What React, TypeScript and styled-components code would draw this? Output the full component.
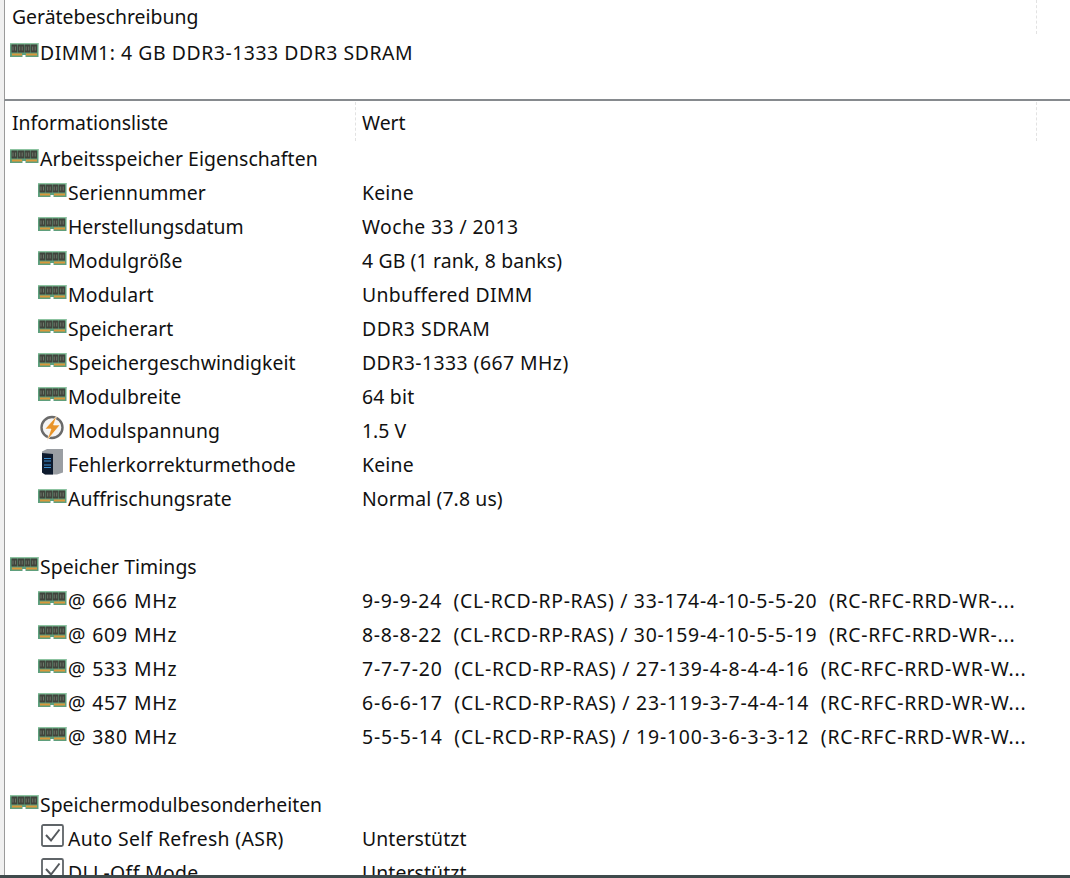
import React from "react";
import styled, { createGlobalStyle } from "styled-components";

const Global = createGlobalStyle`
  html, body { margin: 0; padding: 0; background: #fff; }
  body { width: 1070px; height: 878px; overflow: hidden; }
`;

const Page = styled.div`
  width: 1070px;
  height: 878px;
  box-sizing: border-box;
  display: flex;
  flex-direction: column;
  overflow: hidden;
  padding-left: 4px;
  background: #f0f0f0;
  border-bottom: 3px solid #3f4a4c;
  font-family: "Noto Sans", "Open Sans", sans-serif;
  font-size: 19.4px;
  color: #111;
`;

const Panel = styled.div`
  flex: 1;
  min-height: 0;
  overflow: hidden;
  background: #fff;
  border-left: 1px solid #9a9a9a;
  padding-left: 1px;
`;

const TopPanel = styled(Panel)`
  flex: none;
  height: 99px;
  border-bottom: 2px solid #868a8e;
`;

const HeaderRow = styled.div`
  height: 34px;
  display: grid;
  grid-template-columns: 1031px 1fr;
`;

const ListHeaderRow = styled.div`
  height: 41px;
  box-sizing: border-box;
  padding-top: 1px;
  display: grid;
  grid-template-columns: 350px 681px 1fr;
`;

const HeaderCell = styled.div`
  display: flex;
  align-items: center;
  padding-left: 6px;
  padding-bottom: 2px;
  white-space: pre;
  border-right: ${p => (p.$plain ? "none" : "1px dashed #e2e2e2")};
`;

const ListHeaderCell = styled(HeaderCell)`
  padding-top: 3px;
  padding-bottom: 1px;
  margin-bottom: 1px;
`;

const Row = styled.div`
  height: 34px;
  display: grid;
  grid-template-columns: 350px 1fr;
  align-items: center;
`;

const DeviceRow = styled(Row)`
  margin-top: 2px;
`;

const NameCell = styled.div`
  display: flex;
  align-items: center;
  padding-left: ${p => 4 + p.$level * 28}px;
  padding-bottom: 2px;
  white-space: pre;
  letter-spacing: ${p => p.$ls ?? 0}px;
`;

const ValueCell = styled.div`
  padding-left: 6px;
  padding-bottom: 2px;
  white-space: pre;
  letter-spacing: ${p => p.$ls ?? 0}px;
`;

const IconBox = styled.svg`
  flex: none;
  width: 30px;
  height: 24px;
  position: relative;
  top: -2px;
  overflow: visible;
`;

const Ram = () => (
  <IconBox viewBox="0 0 30 24">
    <rect x="0" y="5" width="28.5" height="14" fill="#5f9f7c" />
    <rect x="0" y="5" width="28.5" height="1.4" fill="#8cc3a0" />
    <rect x="1.5" y="6.5" width="6" height="8" fill="#40443c" />
    <rect x="8" y="6.5" width="6" height="8" fill="#40443c" />
    <rect x="14.5" y="6.5" width="6" height="8" fill="#40443c" />
    <rect x="21" y="6.5" width="6" height="8" fill="#40443c" />
    <path d="M3 8.5v4M5.5 8.5v4M9.7 8.5v4M12.2 8.5v4M16.2 8.5v4M18.7 8.5v4M22.7 8.5v4M25.2 8.5v4" stroke="#7a8476" strokeWidth="0.8" />
    <rect x="2" y="15.5" width="10" height="2" fill="#d9983a" />
    <rect x="16" y="15.5" width="11" height="2" fill="#d9983a" />
    <rect x="12.5" y="17" width="3" height="2.2" fill="#fff" />
  </IconBox>
);

const Bolt = () => (
  <IconBox viewBox="0 0 30 24">
    <circle cx="14" cy="11.5" r="10.5" fill="#f4f4f4" stroke="#6a6a6a" strokeWidth="2.4" />
    <path d="M19 -0.5 7 13h6l-4 11.5 13-15.5h-6.5z" fill="#e8942a" stroke="#fff" strokeWidth="0.6" />
  </IconBox>
);

const Server = () => (
  <IconBox viewBox="0 0 30 24">
    <path d="M4 1.5 9 -1h16v23.5l-6 2H7l-3-2z" fill="#9a9ea3" />
    <path d="M4 3l11 1v20.5H7l-3-2z" fill="#0e1b2e" />
    <path d="M6 8.5h7M6 11h7M6 15h7M6 17.5h7" stroke="#3d8fd0" strokeWidth="1" />
  </IconBox>
);

const Check = () => (
  <IconBox viewBox="0 0 30 24">
    <rect x="4" y="1" width="21" height="21" rx="1.5" fill="#fff" stroke="#5f6468" strokeWidth="1.8" />
    <path d="m8 11 5 5.5 8.5-11" fill="none" stroke="#55595d" strokeWidth="2" />
  </IconBox>
);

const icons = { ram: Ram, bolt: Bolt, server: Server, check: Check };

type Item = { level?: number; icon?: keyof typeof icons; name?: string; value?: string; ls?: number; vs?: number };

const rows: Item[] = [
  { level: 0, icon: "ram", name: "Arbeitsspeicher Eigenschaften", ls: 0.07 },
  { level: 1, icon: "ram", name: "Seriennummer", value: "Keine", ls: 0.1, vs: 0.2 },
  { level: 1, icon: "ram", name: "Herstellungsdatum", value: "Woche 33 / 2013", ls: 0, vs: 0.4 },
  { level: 1, icon: "ram", name: "Modulgröße", value: "4 GB (1 rank, 8 banks)", ls: 0.2, vs: 0.13 },
  { level: 1, icon: "ram", name: "Modulart", value: "Unbuffered DIMM", ls: 0.2, vs: 0.33 },
  { level: 1, icon: "ram", name: "Speicherart", value: "DDR3 SDRAM", ls: 0.1, vs: 0.5 },
  { level: 1, icon: "ram", name: "Speichergeschwindigkeit", value: "DDR3-1333 (667 MHz)", ls: 0.05, vs: 0.45 },
  { level: 1, icon: "ram", name: "Modulbreite", value: "64 bit", ls: 0.15, vs: 0.2 },
  { level: 1, icon: "bolt", name: "Modulspannung", value: "1.5 V", ls: 0.15, vs: 0 },
  { level: 1, icon: "server", name: "Fehlerkorrekturmethode", value: "Keine", ls: 0.1, vs: 0.2 },
  { level: 1, icon: "ram", name: "Auffrischungsrate", value: "Normal (7.8 us)", ls: 0.05, vs: 0.13 },
  {},
  { level: 0, icon: "ram", name: "Speicher Timings", ls: 0.05 },
  { level: 1, icon: "ram", name: "@ 666 MHz", value: "9-9-9-24  (CL-RCD-RP-RAS) / 33-174-4-10-5-5-20  (RC-RFC-RRD-WR-...", ls: 0.85, vs: 0.72 },
  { level: 1, icon: "ram", name: "@ 609 MHz", value: "8-8-8-22  (CL-RCD-RP-RAS) / 30-159-4-10-5-5-19  (RC-RFC-RRD-WR-...", ls: 0.85, vs: 0.72 },
  { level: 1, icon: "ram", name: "@ 533 MHz", value: "7-7-7-20  (CL-RCD-RP-RAS) / 27-139-4-8-4-4-16  (RC-RFC-RRD-WR-W...", ls: 0.85, vs: 0.8 },
  { level: 1, icon: "ram", name: "@ 457 MHz", value: "6-6-6-17  (CL-RCD-RP-RAS) / 23-119-3-7-4-4-14  (RC-RFC-RRD-WR-W...", ls: 0.85, vs: 0.8 },
  { level: 1, icon: "ram", name: "@ 380 MHz", value: "5-5-5-14  (CL-RCD-RP-RAS) / 19-100-3-6-3-3-12  (RC-RFC-RRD-WR-W...", ls: 0.85, vs: 0.8 },
  {},
  { level: 0, icon: "ram", name: "Speichermodulbesonderheiten", ls: 0 },
  { level: 1, icon: "check", name: "Auto Self Refresh (ASR)", value: "Unterstützt", ls: 0.35, vs: 0.1 },
  { level: 1, icon: "check", name: "DLL-Off Mode", value: "Unterstützt", ls: 0.35, vs: 0.1 },
];

export default function App() {
  return (
    <Page>
      <Global />
      <TopPanel>
        <HeaderRow>
          <HeaderCell>Gerätebeschreibung</HeaderCell>
          <HeaderCell $plain />
        </HeaderRow>
        <DeviceRow>
          <NameCell $level={0} $ls={0.55}><Ram />DIMM1: 4 GB DDR3-1333 DDR3 SDRAM</NameCell>
        </DeviceRow>
      </TopPanel>
      <Panel>
        <ListHeaderRow>
          <ListHeaderCell>Informationsliste</ListHeaderCell>
          <ListHeaderCell>Wert</ListHeaderCell>
          <ListHeaderCell $plain />
        </ListHeaderRow>
        {rows.map((r, i) => {
          const Icon = r.icon ? icons[r.icon] : null;
          return (
            <Row key={i}>
              <NameCell $level={r.level ?? 0} $ls={r.ls}>
                {Icon && <Icon />}
                {r.name}
              </NameCell>
              <ValueCell $ls={r.vs}>{r.value}</ValueCell>
            </Row>
          );
        })}
      </Panel>
    </Page>
  );
}
